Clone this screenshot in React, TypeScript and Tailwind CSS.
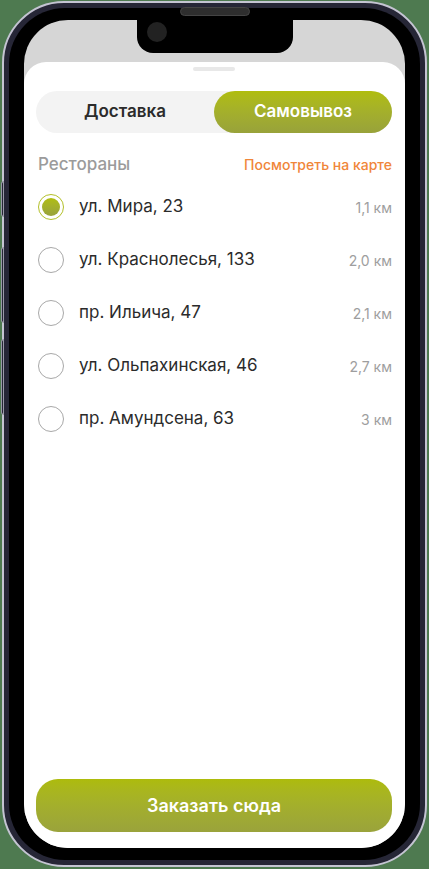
const restaurants = [
  { address: 'ул. Мира, 23', distance: '1,1 км' },
  { address: 'ул. Краснолесья, 133', distance: '2,0 км' },
  { address: 'пр. Ильича, 47', distance: '2,1 км' },
  { address: 'ул. Ольпахинская, 46', distance: '2,7 км' },
  { address: 'пр. Амундсена, 63', distance: '3 км' },
];

function Radio({ checked }: { checked: boolean }) {
  if (checked) {
    return (
      <div className="w-[26px] h-[26px] shrink-0 rounded-full border-[1.5px] border-[#b3c02a] flex items-center justify-center">
        <div className="w-[18px] h-[18px] rounded-full bg-linear-to-b from-[#b0bd0b] to-[#98a23a]" />
      </div>
    );
  }
  return <div className="w-[26px] h-[26px] shrink-0 rounded-full border-[1.5px] border-[#a8a8a8]" />;
}

export default function App() {
  return (
    <div className="w-[429px] h-[869px] bg-[#4e7a50] pt-[1px] px-[2px] font-['Inter',sans-serif]">
      <div className="relative h-[866px] rounded-[62px] border-2 border-[#c4c4d2] bg-[#262636] p-[5px]">
        {/* side buttons */}
        <div className="absolute left-[-3px] top-[178px] w-[3px] h-[36px] rounded-l-sm border border-[#9a9aa8] bg-[#262636]" />
        <div className="absolute left-[-3px] top-[244px] w-[3px] h-[76px] rounded-l-sm border border-[#9a9aa8] bg-[#262636]" />
        <div className="absolute left-[-3px] top-[336px] w-[3px] h-[76px] rounded-l-sm border border-[#9a9aa8] bg-[#262636]" />
        {/* speaker */}
        <div className="absolute left-[176px] top-[4px] w-[70px] h-[9px] rounded-full bg-[#2e2e2e] border border-[#444]" />
        <div className="h-full rounded-[56px] bg-black px-[15px] py-[12px]">
          <div className="relative h-full rounded-[44px] bg-[#d6d6d6] overflow-hidden flex flex-col">
            {/* notch */}
            <div className="absolute left-[113px] top-0 w-[156px] h-[33px] bg-black rounded-b-[16px]">
              <div className="absolute left-[10px] top-[2px] w-[20px] h-[20px] rounded-full bg-[#222]" />
            </div>

            <div className="h-[42px] shrink-0" />

            <div className="flex-1 bg-white rounded-t-[22px] flex flex-col pl-[12px] pr-[13px] pb-[16px]">
              <div className="flex justify-center pt-[5px]">
                <div className="w-[42px] h-[4px] rounded-full bg-[#e8e8e8]" />
              </div>

              <div className="mt-[20px] h-[42px] rounded-full bg-[#f3f3f3] flex">
                <div className="flex-1 flex items-center justify-center text-[17px] font-semibold text-[#2b2b2b]">
                  Доставка
                </div>
                <div className="flex-1 rounded-full bg-linear-to-b from-[#b0bd0b] to-[#98a23a] flex items-center justify-center text-[17px] font-semibold text-white">
                  Самовывоз
                </div>
              </div>

              <div className="mt-[19px] flex items-center justify-between pl-[2px]">
                <span className="text-[17px] text-[#9b9b9b] font-medium">Рестораны</span>
                <span className="text-[14px] text-[#f0863a] font-medium">Посмотреть на карте</span>
              </div>

              <div className="mt-[3px] flex flex-col">
                {restaurants.map((r, i) => (
                  <div key={r.address} className="h-[53px] flex items-center pl-[2px]">
                    <Radio checked={i === 0} />
                    <span className="ml-[15px] flex-1 text-[17px] text-[#2b2b2b]">{r.address}</span>
                    <span className="text-[14px] text-[#9e9e9e]">{r.distance}</span>
                  </div>
                ))}
              </div>

              <div className="flex-1" />

              <button className="h-[53px] rounded-[22px] bg-linear-to-b from-[#adbb0b] to-[#9aa33b] text-white text-[18px] font-semibold">
                Заказать сюда
              </button>
            </div>
          </div>
        </div>
      </div>
    </div>
  );
}
